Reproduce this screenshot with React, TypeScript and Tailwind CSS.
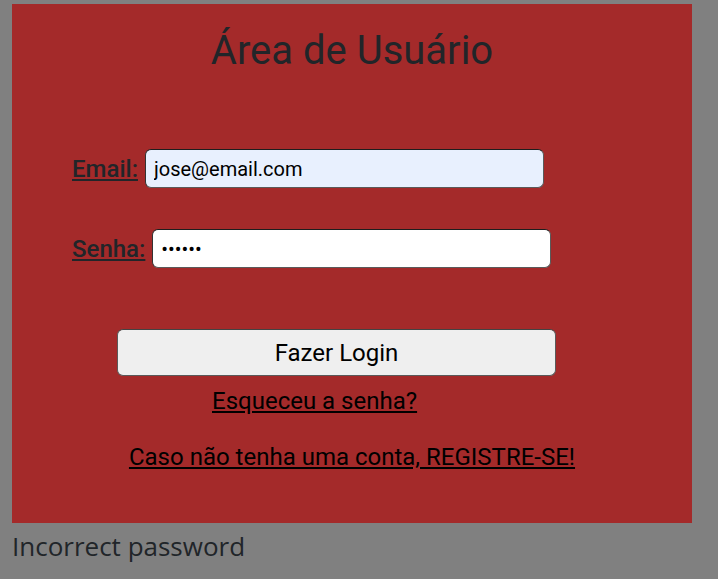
import React from 'react';

const App: React.FC = () => {
  return (
    <div className="min-h-[579px] bg-[#808080] pt-[4px]" style={{ fontFamily: 'Roboto, sans-serif' }}>
      <div className="ml-[12px] w-[680px] h-[519px] bg-[#a42a2a] flex flex-col">
        <h1 className="text-center text-[40px] leading-[46px] text-[#212529] pt-[24px]">Área de Usuário</h1>

        <form className="flex flex-col" onSubmit={(e) => e.preventDefault()}>
          <div className="flex items-center pl-[60px] mt-[75px] gap-[7px]">
            <label className="text-[24px] font-medium underline text-[#212529]">Email:</label>
            <input
              type="email"
              defaultValue="jose@email.com"
              className="w-[399px] h-[39px] rounded-[6px] border border-[#5a5a5a] border-t-[#1e1e1e] border-l-[#333] bg-[#e8f0fe] px-[8px] text-[20px] text-black outline-none"
            />
          </div>
          <div className="flex items-center pl-[60px] mt-[41px] gap-[7px]">
            <label className="text-[24px] font-medium underline text-[#212529]">Senha:</label>
            <input
              type="password"
              defaultValue="123456"
              className="w-[399px] h-[39px] rounded-[6px] border border-[#5a5a5a] border-t-[#1e1e1e] border-l-[#333] bg-white px-[8px] text-[20px] text-black outline-none"
            />
          </div>
          <div className="mt-[61px] pl-[105px]">
            <button className="w-[439px] h-[47px] rounded-[6px] border border-[#5a5a5a] border-t-[#444] bg-[#efefef] text-[24px] text-black">
              Fazer Login
            </button>
          </div>
        </form>

        <a href="#" className="ml-[200px] mt-[10px] self-start text-[24px] leading-[30px] text-black underline">Esqueceu a senha?</a>
        <a href="#" className="mt-[26px] self-center text-[24px] leading-[30px] text-black underline">Caso não tenha uma conta, REGISTRE-SE!</a>
      </div>
      <p className="pl-[12px] pt-[3px] text-[26px] leading-[40px] text-[#212529]" style={{ fontFamily: '"Open Sans", sans-serif' }}>Incorrect password</p>
    </div>
  );
};

export default App;
